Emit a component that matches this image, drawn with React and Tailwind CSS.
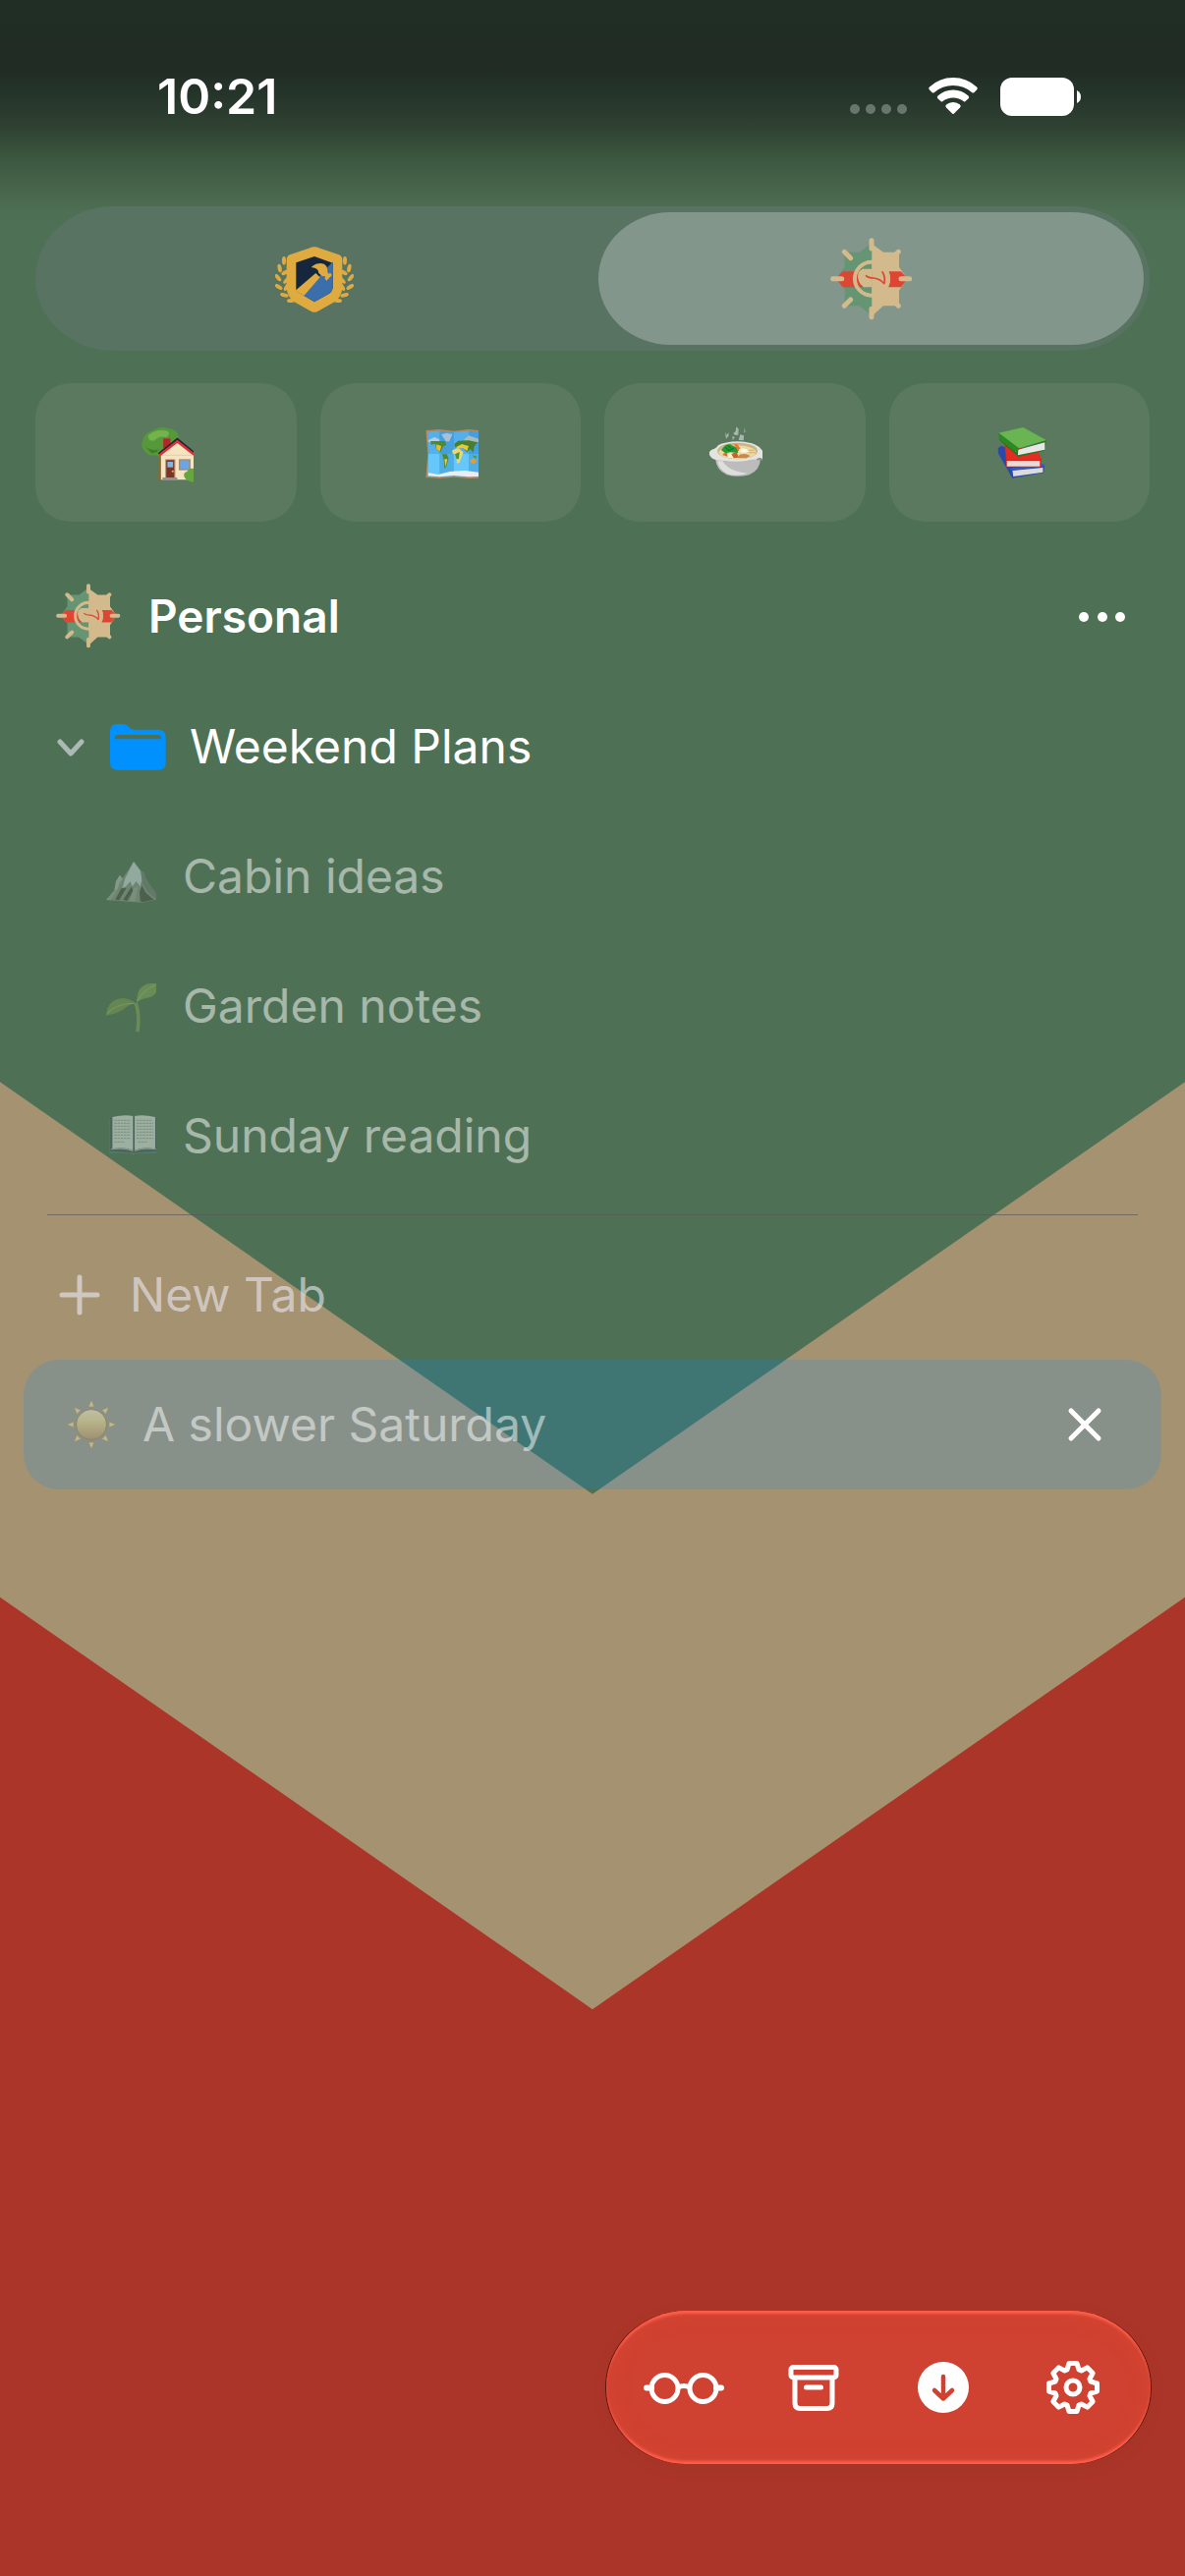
import React from "react";

/* ---------- badges ---------- */

function SunBadge({ className }) {
  return (
    <svg viewBox="74 65 252 252" className={className} aria-hidden="true">
      <path d="M201 80L164 109H118V154L92 190L118 220V273H162L188 292L201 306Z" fill="#659573" />
      <path d="M201 84L236 109H284V154L309 190L284 226V273H236L206 300H201Z" fill="#d2ba8d" />
      <path d="M112 168H290L310 190L290 216H112L92 190Z" fill="#dd4633" />
      <path d="M201 134A56 56 0 0 1 201 246Z" fill="#d2ba8d" />
      <circle cx="200" cy="190" r="51" fill="none" stroke="#d2ba8d" strokeWidth="12" />
      <path d="M201 146A45 45 0 0 0 168 161L201 161Z" fill="#659573" />
      <path d="M159 206A44 44 0 0 0 201 234V218Q176 220 159 196Z" fill="#659573" />
      <path d="M201 146A45 45 0 0 1 201 236Z" fill="#d2ba8d" />
      <path d="M160 170Q152 200 176 216L201 216V160H172Z" fill="#d2ba8d" />
      <path d="M158 176Q155 200 174 216H164Q152 200 158 176Z" fill="#dd4633" />
      <path d="M182 180Q190 188 206 188Q228 191 239 206M232 168Q244 184 238 207" fill="none" stroke="#dd4633" strokeWidth="5" />
      <g stroke="#d2ba8d" strokeWidth="15" strokeLinecap="round">
        <path d="M200 73V98M200 282V307M82 190H109M290 190H316M117 108L136 127M117 273L136 254" />
        <path d="M272 118L282 108M272 263L282 273" />
      </g>
    </svg>
  );
}

const leaves = [
  [116, 135, 0],
  [103, 158, -12],
  [98, 187, -40],
  [100, 215, -60],
  [117, 240, -75],
  [138, 257, -92],
  [120, 171, 60],
  [124, 195, 45],
  [124, 216, 30],
];

function HammerBadge({ className }) {
  return (
    <svg viewBox="89 71 240 240" className={className} aria-hidden="true">
      <g fill="#dfab40">
        {leaves.map(([x, y, r]) => (
          <g key={`${x}-${y}`}>
            <ellipse cx={x} cy={y} rx="6" ry="13" transform={`rotate(${r} ${x} ${y})`} />
            <ellipse cx={418 - x} cy={y} rx="6" ry="13" transform={`rotate(${-r} ${418 - x} ${y})`} />
          </g>
        ))}
        <path d="M209 93Q217 93 226 97L284 117Q294 121 294 132V215Q294 246 268 262L220 289Q209 296 198 289L150 262Q124 246 124 215V132Q124 121 134 117L192 97Q201 93 209 93Z" />
      </g>
      <path d="M209 122L265 142V218Q262 232 252 237L209 261L153 228V141Z" fill="#16263d" />
      <path d="M265 138V218Q262 232 252 237L209 261L172 239Z" fill="#3b6fab" />
      <path d="M150 227L213 173L226 186L177 242Z" fill="#dfab40" />
      <path d="M201 153Q218 139 238 145Q250 150 249 170L252 175Q260 169 262 180L246 196Q239 192 242 183Q232 184 222 173Q222 158 201 156Z" fill="#dfab40" />
    </svg>
  );
}

/* ---------- pictograms ---------- */

function House() {
  return (
    <svg viewBox="372 153 140 180" preserveAspectRatio="none" className="h-[60px] w-[54px]" aria-hidden="true">
      <path d="M421 248H429V325H416Q423 290 421 248Z" fill="#8a6a2f" />
      <path d="M378 205Q384 180 404 175Q424 160 446 168Q470 173 472 192Q478 220 450 246Q430 260 410 250Q392 253 385 240Q370 225 378 205Z" fill="#56993a" />
      <path d="M392 190Q410 170 440 175Q455 182 440 195Q420 190 410 205Q392 210 392 190Z" fill="#74b24c" />
      <path d="M386 225Q400 238 420 232Q414 246 400 243Z" fill="#3f7d2b" />
      <rect x="432" y="199" width="19" height="30" fill="#b5262a" />
      <path d="M426 244L469 206L512 244V325H426Z" fill="#f6e3c0" />
      <path d="M426 250H512" stroke="#dcc69c" strokeWidth="2" />
      <path d="M421 247L469 203L513 244" fill="none" stroke="#222733" strokeWidth="9" />
      <path d="M422 250L469 208L513 248" fill="none" stroke="#d9343c" strokeWidth="7" />
      <rect x="437" y="262" width="27" height="60" fill="#b89a82" />
      <rect x="440" y="265" width="21" height="55" fill="#7b3524" />
      <rect x="443" y="270" width="15" height="17" fill="#7fb6e6" />
      <circle cx="457" cy="299" r="3" fill="#e3b04b" />
      <rect x="430" y="318" width="39" height="8" fill="#9c9189" />
      <rect x="473" y="262" width="31" height="34" fill="#a38d78" />
      <rect x="477" y="266" width="23" height="25" fill="#6aa6e4" />
      <path d="M512 291Q500 288 495 300Q483 304 488 317Q494 330 512 332Z" fill="#67a53f" />
    </svg>
  );
}

function WorldMap() {
  return (
    <svg viewBox="1126 153 140 180" preserveAspectRatio="none" className="h-[60px] w-[54px]" aria-hidden="true">
      <path d="M1127 174L1163 171L1201 176L1240 171L1266 174V320L1240 321L1201 317L1163 321L1127 318L1132 246Z" fill="#b08a62" />
      <path d="M1131 178L1163 176L1201 180L1240 176L1266 178V315L1240 316L1201 312L1163 316L1132 313L1135 246Z" fill="#53b0ec" />
      <path d="M1134 246H1266V315L1240 316L1201 312L1163 316L1132 313Z" fill="#66c8fa" />
      <path d="M1163 176L1201 180V312L1163 316Z" fill="#2f86c8" opacity=".4" />
      <path d="M1240 176L1266 178V315L1240 316Z" fill="#2f86c8" opacity=".4" />
      <path d="M1168 187L1182 182L1197 186L1189 208L1180 208Z" fill="#a9bfd4" />
      <path d="M1132 205L1150 195L1163 202V208L1136 211Z" fill="#b7cddb" />
      <path d="M1228 202L1240 190L1266 200V210L1230 210Z" fill="#a9b9bc" />
      <path d="M1139 207L1178 207L1181 218L1172 224L1166 240L1154 230L1152 215L1141 218Z" fill="#4f8a2c" />
      <path d="M1155 217L1168 222L1164 238L1155 231Z" fill="#eabf2c" />
      <path d="M1170 247L1182 247L1187 259L1181 285L1176 290L1175 268Z" fill="#4f8a2c" />
      <path d="M1176 262L1184 262L1179 286Z" fill="#ecc93b" />
      <path d="M1202 216L1212 206L1240 205L1264 211L1255 222L1252 242L1244 230L1236 241L1224 228L1204 226Z" fill="#477f2a" />
      <path d="M1208 224L1222 216L1240 222L1236 237L1224 228L1208 230Z" fill="#e9c835" />
      <path d="M1197 235L1212 228L1226 241L1216 272L1209 275L1207 250L1197 244Z" fill="#ead874" />
      <path d="M1204 247L1216 240L1214 262L1208 262Z" fill="#54912e" />
      <ellipse cx="1252" cy="268" rx="8" ry="8" fill="#e99a2b" />
      <path d="M1249 250L1262 254L1258 260Z" fill="#54912e" />
      <path d="M1134 304L1160 309L1190 300L1230 297L1266 302V315L1240 316L1201 312L1163 316L1133 313Z" fill="#e8eef4" />
    </svg>
  );
}

function Soup() {
  return (
    <svg viewBox="310 153 140 180" preserveAspectRatio="none" className="h-[60px] w-[54px]" aria-hidden="true">
      <path d="M351 178L355 189L360 181L361 190L354 200ZM381 163L387 170L386 188L378 189L373 184L379 177ZM391 187L401 190L400 205L387 204ZM371 191L377 196L371 205ZM402 166L405 178L402 182Z" fill="#d9e2de" opacity=".6" />
      <path d="M325 258H445Q444 296 415 310Q385 319 356 310Q328 296 325 258Z" fill="#bcbcbc" />
      <path d="M345 268Q360 300 410 305Q385 316 360 308Q334 295 331 268Z" fill="#dedede" />
      <path d="M333 220Q350 209 385 208Q425 209 442 226L450 236V265Q430 260 410 266Q380 272 350 266Q322 268 314 256Q304 242 316 233Q328 230 333 220Z" fill="#e4e3e0" />
      <path d="M434 262Q444 254 450 262V265H436Z" fill="#8f8f8f" />
      <ellipse cx="384" cy="237" rx="53" ry="25" fill="#c9b384" />
      <ellipse cx="384" cy="241" rx="49" ry="21" fill="#ead8a5" />
      <path d="M341 234L352 219L364 216L374 223L385 227V243L366 241L352 244Z" fill="#239a32" />
      <path d="M352 226L362 236L374 228M358 220L366 228" stroke="#0f6f25" strokeWidth="3" fill="none" />
      <path d="M374 215L384 217L394 233L386 238Z" fill="#f0752c" />
      <path d="M345 246L357 241L358 254L346 250Z" fill="#dc6e2b" />
      <path d="M358 248L372 243L384 258H360Z" fill="#f6eedb" />
      <path d="M368 246L382 240L387 257L374 259Z" fill="#cc5f2b" />
      <path d="M384 253Q400 240 418 252L408 259H386Z" fill="#c98a49" />
      <path d="M388 232Q402 224 414 238Q402 246 390 240Z" fill="#fbf6e6" />
      <path d="M414 235H428M414 242H432" stroke="#cfb064" strokeWidth="3" />
    </svg>
  );
}

function Books() {
  return (
    <svg viewBox="1064 153 140 180" preserveAspectRatio="none" className="h-[60px] w-[54px]" aria-hidden="true">
      <path d="M1074 228L1083 221L1196 282L1194 304L1111 320L1074 244Z" fill="#2d49a8" />
      <path d="M1112 297L1192 288V302L1114 315Z" fill="#dcdcdc" />
      <path d="M1106 290L1194 276L1196 284L1110 296Z" fill="#3a59c4" />
      <path d="M1091 218L1096 286H1187L1188 262L1178 240Z" fill="#d8231b" />
      <path d="M1097 267H1184V284H1097Z" fill="#e4dedb" />
      <path d="M1092 222L1097 264H1188L1180 240Z" fill="#e52c21" />
      <path d="M1076 182L1126 234L1201 204L1196 236L1127 255L1077 203Z" fill="#217a1c" />
      <path d="M1127 233L1197 211V233L1126 250Z" fill="#e8e6e6" />
      <path d="M1075 182L1140 165L1201 204L1128 229Z" fill="#69b552" />
      <path d="M1076 182L1128 228V233L1122 243L1077 200Z" fill="#2d8a23" />
    </svg>
  );
}

function Mountain() {
  return (
    <svg viewBox="24 -9 153 180" preserveAspectRatio="none" className="h-[60px] w-[51px]" aria-hidden="true">
      <path d="M24 153L48 124L54 96L66 77L74 88L108 36L132 66L140 68L144 86L177 135V152L136 161L90 158Z" fill="#8f9a90" />
      <path d="M108 36L130 66L134 92L128 112L116 96L104 112L98 96L84 112L74 116L82 88Z" fill="#d3e2e6" />
      <path d="M66 77L74 88L66 100L58 122L50 124L54 96Z" fill="#b6c4c2" />
      <path d="M130 66L140 68L144 86L177 135V150L150 128L134 100Z" fill="#76827f" />
      <path d="M126 96L134 108L126 128L128 156L136 160L170 152L146 132ZM70 118L52 152L64 154L86 116ZM102 112L76 152L88 156L106 126Z" fill="#4c5247" />
      <path d="M24 153L46 128L60 118L38 154ZM108 118L122 110L112 156H96Z" fill="#a9ab9e" />
    </svg>
  );
}

function Sprout() {
  return (
    <svg viewBox="218 492 142 180" preserveAspectRatio="none" className="h-[60px] w-[51px]" aria-hidden="true">
      <path d="M302 572Q314 610 307 661" fill="none" stroke="#86a552" strokeWidth="10" />
      <path d="M218 611Q222 560 268 558Q288 560 302 575Q282 575 268 592Q248 606 218 611Z" fill="#7d9c50" />
      <path d="M222 605Q245 575 300 574" fill="none" stroke="#9dbd6f" strokeWidth="3" />
      <path d="M305 570Q304 520 340 513H360V540Q352 556 330 558Q314 562 305 570Z" fill="#84a657" />
      <path d="M306 568Q320 535 358 517" fill="none" stroke="#a3c37a" strokeWidth="3" />
    </svg>
  );
}

function OpenBook() {
  return (
    <svg viewBox="218 888 142 180" preserveAspectRatio="none" className="h-[60px] w-[51px]" aria-hidden="true">
      <path d="M227 925H362V1032H305L296 1036L286 1031H227Z" fill="#4f8590" />
      <path d="M229 923H362V1026L296 1030L229 1025Z" fill="#4b5a5f" />
      <path d="M236 921Q270 912 294 918V1022Q270 1012 236 1018Z" fill="#eceeeb" />
      <path d="M299 918Q322 912 357 921V1018Q322 1012 299 1022Z" fill="#eceeeb" />
      <path d="M232 1019Q270 1014 294 1024M299 1024Q322 1014 359 1019" fill="none" stroke="#b9beba" strokeWidth="4" />
      <g stroke="#8a918b" strokeWidth="2" strokeDasharray="7 2">
        <path d="M241 931H287M241 940H287M241 949H287M241 958H287M241 967H287M241 976H287M241 986H287M241 997H270" />
        <path d="M304 931H348M304 940H352M304 949H352M304 958H352M304 967H352M304 976H352M304 986H352M308 997H336" />
      </g>
    </svg>
  );
}

const rays = [0, 45, 90, 135, 180, 225, 270, 315];

function Sun() {
  return (
    <svg viewBox="-30 -30 60 60" className="size-[60px]" aria-hidden="true">
      <defs>
        <linearGradient id="sun" x1="0" y1="0" x2="0" y2="1">
          <stop offset="0" stopColor="#f4ecca" />
          <stop offset=".35" stopColor="#ecdc8e" />
          <stop offset="1" stopColor="#b68d58" />
        </linearGradient>
      </defs>
      <circle r="15.500" fill="url(#sun)" stroke="#98773f" strokeWidth="1" />
      {rays.map((angle) => (
        <path key={angle} d="M0 -25L3 -18H-3Z" transform={`rotate(${angle})`} fill="#f1e39a" stroke="#a98a50" strokeWidth=".7" />
      ))}
    </svg>
  );
}

/* ---------- control icons ---------- */

function Folder() {
  return (
    <svg viewBox="230 527 160 142" preserveAspectRatio="none" className="h-[47px] w-[57px]" aria-hidden="true">
      <path d="M230 550Q230 527 251 527H266Q275 527 281 534L287 540Q291 544 298 544H367Q389 544 389 567V646Q389 668 367 668H252Q230 668 230 646Z" fill="#0091ff" />
      <path d="M243 573V569Q243 560 252 560H367Q376 560 376 569V573Z" fill="#4e7155" />
    </svg>
  );
}

function Glasses() {
  return (
    <svg viewBox="0 0 82 60" className="h-[60px] w-[82px]" fill="none" stroke="currentColor" strokeWidth="5" aria-hidden="true">
      <circle cx="21.500" cy="31" r="13.500" />
      <circle cx="60.500" cy="31" r="13.500" />
      <path d="M35 30Q41 27 47 30" />
      <path d="M3 30.500H8M74 30.500H79" strokeLinecap="round" strokeWidth="6" />
    </svg>
  );
}

function Archive() {
  return (
    <svg viewBox="0 0 60 60" className="size-[60px]" fill="none" stroke="currentColor" strokeWidth="5" strokeLinecap="round" aria-hidden="true">
      <rect x="7" y="9.500" width="46" height="10.500" rx="2.500" />
      <path d="M11 21V46Q11 51.500 16.500 51.500H43.500Q49 51.500 49 46V21" />
      <path d="M22.500 30H37.500" />
    </svg>
  );
}

function Download() {
  return (
    <svg viewBox="0 0 60 60" className="size-[60px]" aria-hidden="true">
      <circle cx="30" cy="30" r="26" fill="#fff" />
      <path d="M30 19V40M21 33L30 41.500L39 33" fill="none" stroke="#cf4130" strokeWidth="4.500" strokeLinecap="round" strokeLinejoin="round" />
    </svg>
  );
}

const gearOutline = rays
  .flatMap((deg) => {
    const a = (deg * Math.PI) / 180;
    return [
      [-6, -18],
      [-4, -24.5],
      [4, -24.5],
      [6, -18],
    ].map(([x, y]) => `${(x * Math.cos(a) - y * Math.sin(a)).toFixed(2)},${(x * Math.sin(a) + y * Math.cos(a)).toFixed(2)}`);
  })
  .join(" ");

function Gear() {
  return (
    <svg viewBox="-30 -30 60 60" className="size-[60px]" fill="none" stroke="currentColor" strokeWidth="5" strokeLinejoin="round" aria-hidden="true">
      <polygon points={gearOutline} />
      <circle r="7" />
    </svg>
  );
}

/* ---------- page ---------- */

const shortcuts = [
  { label: "Home", Icon: House },
  { label: "Travel", Icon: WorldMap },
  { label: "Recipes", Icon: Soup },
  { label: "Library", Icon: Books },
];

const tabs = [
  { title: "Cabin ideas", Icon: Mountain },
  { title: "Garden notes", Icon: Sprout },
  { title: "Sunday reading", Icon: OpenBook },
];

const tools = [
  { label: "Reading list", Icon: Glasses },
  { label: "Archive", Icon: Archive },
  { label: "Downloads", Icon: Download },
  { label: "Settings", Icon: Gear },
];

function StatusBar() {
  return (
    <header className="flex h-[196px] items-center justify-between pr-[106px] pl-[160px]">
      <time className="text-[50px] leading-none font-semibold">10:21</time>
      <div className="flex items-center">
        <svg viewBox="0 0 60 40" className="mr-[21px] h-[40px] w-[60px]" fill="#fff" fillOpacity=".3" aria-hidden="true">
          <circle cx="6" cy="33" r="5" />
          <circle cx="22" cy="33" r="5" />
          <circle cx="38" cy="33" r="5" />
          <circle cx="54" cy="33" r="5" />
        </svg>
        <svg viewBox="0 0 50 38" className="h-[38px] w-[50px]" fill="#fff" aria-hidden="true">
          <path d="M25 0Q39 0 49 9.500Q50.500 11 49 12.500L46.500 15Q45.500 16 44 15Q36 8 25 8Q14 8 6 15Q4.500 16 3.500 15L1 12.500Q-.5 11 1 9.500Q11 0 25 0Z" />
          <path d="M25 12.500Q34 12.500 40.500 18.500Q42 20 40.500 21.500L37.500 24Q36.500 25 35.500 24Q31 20.500 25 20.500Q19 20.500 14.500 24Q13.500 25 12.500 24L9.500 21.500Q8 20 9.500 18.500Q16 12.500 25 12.500Z" />
          <path d="M25 25Q29 25 32 27.500Q33.500 29 32 30.500L26 36.500Q25 37.500 24 36.500L18 30.500Q16.500 29 18 27.500Q21 25 25 25Z" />
        </svg>
        <svg viewBox="0 0 82 39" className="ml-[23px] h-[39px] w-[82px]" fill="#fff" aria-hidden="true">
          <rect width="75" height="39" rx="12" />
          <path d="M78 13Q82 15 82 19.500Q82 24 78 26Z" />
        </svg>
      </div>
    </header>
  );
}

export default function App() {
  return (
    <div className="relative isolate flex min-h-screen flex-col overflow-hidden bg-[#ab3529] text-white [font-family:Inter,'Liberation_Sans',sans-serif]">
      <div className="absolute inset-0 -z-10 bg-[#a59270] [clip-path:polygon(0_0,100%_0,100%_62%,50%_78%,0_62%)]" />
      <div className="absolute inset-0 -z-10 bg-[#4e7155] [clip-path:polygon(0_0,100%_0,100%_42%,50%_58%,0_42%)]" />
      <div className="absolute inset-x-0 top-0 -z-10 h-[240px] bg-[linear-gradient(#212e26_0px,#202c24_70px,#26362b_100px,#2f4232_130px,#3c563f_160px,#47644a_190px,#4d6f53_215px,#4e7155_240px)]" />

      <StatusBar />

      <main className="flex flex-col">
        <div role="group" aria-label="Spaces" className="mx-[36px] mt-[14px] grid h-[147px] grid-cols-2 rounded-[80px/74px] bg-[#587361]">
          <button type="button" aria-label="Work" aria-pressed="false" className="m-[6px] flex items-center justify-center">
            <HammerBadge className="size-[80px]" />
          </button>
          <button type="button" aria-label="Personal" aria-pressed="true" className="m-[6px] flex items-center justify-center rounded-[74px/68px] bg-[#82968c]">
            <SunBadge className="size-[84px]" />
          </button>
        </div>

        <div className="mx-[36px] mt-[33px] grid grid-cols-4 gap-[24px]">
          {shortcuts.map(({ label, Icon }) => (
            <button key={label} type="button" aria-label={label} className="flex h-[141px] items-center justify-center rounded-[36px] bg-[#5a795f] pl-[3px]">
              <Icon />
            </button>
          ))}
        </div>

        <div className="mt-[30px] flex h-[132px] items-center px-[57px]">
          <SunBadge className="size-[66px]" />
          <h1 className="ml-[28px] flex-1 text-[46px] leading-none font-semibold">Personal</h1>
          <button type="button" aria-label="More options" className="py-4">
            <svg viewBox="0 0 52 12" className="h-[12px] w-[52px]" fill="#fff" aria-hidden="true">
              <circle cx="6" cy="7" r="5" />
              <circle cx="25" cy="7" r="5" />
              <circle cx="43" cy="7" r="5" />
            </svg>
          </button>
        </div>

        <button type="button" aria-expanded="true" className="mt-px flex h-[132px] items-center px-[57px] text-left">
          <svg viewBox="0 0 30 20" className="h-[20px] w-[30px]" fill="none" stroke="#ebebf5" strokeOpacity=".6" strokeWidth="5" strokeLinecap="round" strokeLinejoin="round" aria-hidden="true">
            <path d="M4 5L15 17L26 5" />
          </svg>
          <span className="ml-[25px]"><Folder /></span>
          <span className="ml-[24px] text-[48px] leading-none">Weekend Plans</span>
        </button>

        <ul>
          {tabs.map(({ title, Icon }) => (
            <li key={title}>
              <button type="button" className="flex h-[132px] w-full items-center pl-[108px] text-left opacity-50">
                <Icon />
                <span className="ml-[27px] text-[48px] leading-none">{title}</span>
              </button>
            </li>
          ))}
        </ul>

        <hr className="mx-[48px] mt-[14px] border-[#545458]/65" />

        <button type="button" className="mt-[15px] flex h-[132px] items-center pl-[60px] text-left text-[#ebebf5]/60">
          <svg viewBox="0 0 42 42" className="size-[42px]" stroke="currentColor" strokeWidth="5" strokeLinecap="round" aria-hidden="true">
            <path d="M21 3V39M3 21H39" />
          </svg>
          <span className="ml-[30px] text-[48px] leading-none">New Tab</span>
        </button>

        <div className="mx-[24px] flex h-[132px] items-center rounded-[36px] bg-[#0091ff]/18 pr-[60px] pl-[39px]">
          <button type="button" aria-current="page" className="flex h-full flex-1 items-center text-left opacity-50">
            <Sun />
            <span className="ml-[22px] text-[48px] leading-none">A slower Saturday</span>
          </button>
          <button type="button" aria-label="Close tab">
            <svg viewBox="0 0 36 36" className="size-[36px]" stroke="#fff" strokeWidth="5" strokeLinecap="round" aria-hidden="true">
              <path d="M4 4L32 32M32 4L4 32" />
            </svg>
          </button>
        </div>
      </main>

      <nav
        aria-label="Tools"
        className="mt-auto mr-[35px] mb-[114px] flex h-[156px] items-center self-end rounded-[82px/78px] bg-[#cf4130] px-[13px] shadow-[inset_0_4px_3px_-1px_#ff5f4b,inset_0_-4px_3px_-1px_#ff5f4b,inset_0_0_24px_rgba(255,90,70,0.2),-1px_0_0_#5e140c,1px_0_0_#5e140c,0_4px_24px_rgba(0,0,0,0.03)]"
      >
        {tools.map(({ label, Icon }) => (
          <button key={label} type="button" aria-label={label} className="flex h-full w-[132px] items-center justify-center">
            <Icon />
          </button>
        ))}
      </nav>
    </div>
  );
}
